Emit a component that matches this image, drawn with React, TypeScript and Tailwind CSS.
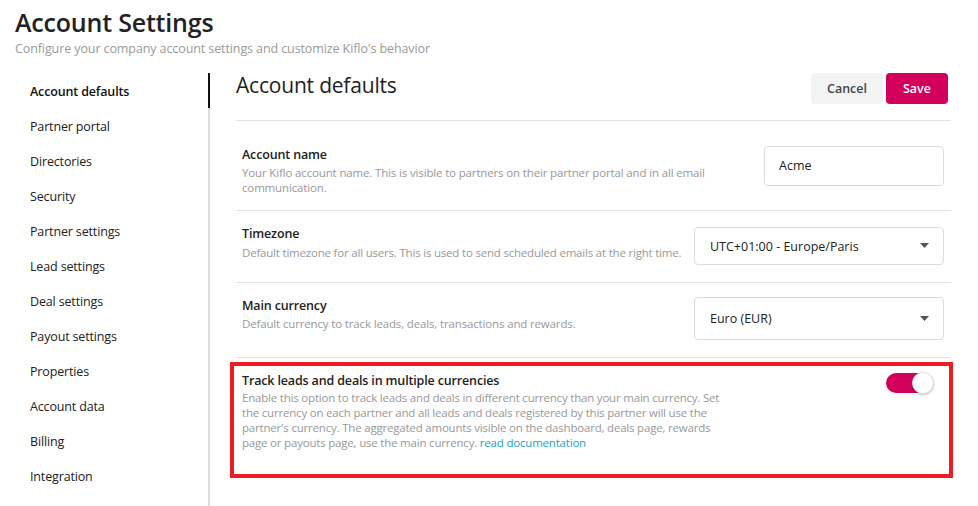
import React, { useState } from 'react';

const navItems = [
  'Account defaults',
  'Partner portal',
  'Directories',
  'Security',
  'Partner settings',
  'Lead settings',
  'Deal settings',
  'Payout settings',
  'Properties',
  'Account data',
  'Billing',
  'Integration',
];

function Caret() {
  return (
    <svg width="9" height="5" viewBox="0 0 9 5" className="shrink-0">
      <path d="M0 0h9L4.5 5z" fill="#555" />
    </svg>
  );
}

export default function App() {
  const [multiCurrency, setMultiCurrency] = useState(true);

  return (
    <div className="w-[978px] h-[506px] overflow-hidden bg-white text-[#222] font-['Open_Sans',sans-serif]">
      {/* Header */}
      <header className="pl-[15px] pt-[5px] h-[73px]">
        <h1 className="text-[25px] font-semibold leading-[34px] tracking-[-0.2px]">Account Settings</h1>
        <p className="text-[12.5px] text-[#9a9a9a] leading-[18px] mt-[1px] tracking-[-0.1px]">
          Configure your company account settings and customize Kiflo's behavior
        </p>
      </header>

      <div className="flex h-[433px]">
        {/* Sidebar */}
        <nav className="w-[210px] shrink-0 border-r-2 border-[#dcdcdc]">
          {navItems.map((item, i) => (
            <div
              key={item}
              className={`h-[35px] pl-[30px] pt-[4px] flex items-center text-[12.5px] tracking-[-0.15px] ${
                i === 0 ? 'font-semibold text-[#111] border-r-2 border-[#111] -mr-[2px]' : 'text-[#222]'
              }`}
            >
              {item}
            </div>
          ))}
        </nav>

        {/* Main */}
        <main className="flex-1 pl-[26px] pr-[27px]">
          <div className="h-[48px] flex justify-between items-start border-b border-[#e3e3e3]">
            <h2 className="text-[21px] leading-[24px] text-[#222] tracking-[-0.2px]">Account defaults</h2>
            <div className="flex gap-[3px] mr-[3px]">
              <button className="w-[72px] h-[31px] rounded-[4px] bg-[#f2f3f3] text-[12.5px] font-semibold text-[#444] pt-[2px]">
                Cancel
              </button>
              <button className="w-[62px] h-[31px] rounded-[4px] bg-[#d2005b] text-[12.5px] font-semibold text-white pt-[2px]">
                Save
              </button>
            </div>
          </div>

          {/* Account name */}
          <div className="h-[90px] flex justify-between border-b border-[#e3e3e3]">
            <div className="pt-[25px] pl-[6px] w-[480px]">
              <div className="text-[12.5px] font-semibold leading-[18px] text-[#222] tracking-[-0.15px]">Account name</div>
              <p className="text-[11.5px] leading-[15px] text-[#999] mt-[1px] tracking-[-0.15px]">
                Your Kiflo account name. This is visible to partners on their partner portal and in all email
                <br />
                communication.
              </p>
            </div>
            <div className="self-center mr-[7px] w-[180px] h-[40px] border border-[#dcdcdc] rounded-[4px] flex items-center pl-[14px] pt-[2px] text-[12.5px] text-[#222]">
              Acme
            </div>
          </div>

          {/* Timezone */}
          <div className="h-[72px] flex justify-between border-b border-[#e3e3e3]">
            <div className="pt-[14px] pl-[6px]">
              <div className="text-[12.5px] font-semibold leading-[18px] text-[#222] tracking-[-0.15px]">Timezone</div>
              <p className="text-[11.5px] leading-[15px] text-[#999] mt-[2px] tracking-[-0.2px]">
                Default timezone for all users. This is used to send scheduled emails at the right time.
              </p>
            </div>
            <div className="self-center mr-[7px] mt-[-2px] w-[250px] h-[38px] border border-[#dcdcdc] rounded-[4px] flex items-center justify-between pl-[15px] pr-[14px] text-[12.5px] text-[#222]">
              <span className="pt-[3px]">UTC+01:00 - Europe/Paris</span>
              <Caret />
            </div>
          </div>

          {/* Main currency */}
          <div className="h-[75px] flex justify-between border-b border-[#e3e3e3]">
            <div className="pt-[14px] pl-[6px]">
              <div className="text-[12.5px] font-semibold leading-[18px] text-[#222] tracking-[-0.15px]">Main currency</div>
              <p className="text-[11.5px] leading-[15px] text-[#999] mt-[1px] tracking-[-0.15px]">
                Default currency to track leads, deals, transactions and rewards.
              </p>
            </div>
            <div className="self-center mr-[7px] mt-[-4px] w-[250px] h-[43px] border border-[#dcdcdc] rounded-[4px] flex items-center justify-between pl-[15px] pr-[14px] text-[12.5px] text-[#222]">
              <span className="pt-[2px]">Euro (EUR)</span>
              <Caret />
            </div>
          </div>

          {/* Multi currency (highlighted) */}
          <div className="mt-[4px] -ml-[6px] -mr-[2px] h-[116px] border-4 border-[#ed1c24] flex justify-between">
            <div className="pt-[6px] pl-[8px] w-[490px]">
              <div className="text-[12.5px] font-semibold leading-[18px] text-[#222] tracking-[-0.15px]">
                Track leads and deals in multiple currencies
              </div>
              <p className="text-[11.5px] leading-[15px] text-[#999] tracking-[-0.2px]">
                Enable this option to track leads and deals in different currency than your main currency. Set
                <br />
                the currency on each partner and all leads and deals registered by this partner will use the
                <br />
                partner's currency. The aggregated amounts visible on the dashboard, deals page, rewards
                <br />
                page or payouts page, use the main currency.{' '}
                <a href="#" className="text-[#1ba1c6]">read documentation</a>
              </p>
            </div>
            <button
              onClick={() => setMultiCurrency(!multiCurrency)}
              className={`mt-[7px] mr-[16px] w-[47px] h-[20px] rounded-full relative ${
                multiCurrency ? 'bg-[#d2005b]' : 'bg-[#ddd]'
              }`}
            >
              <span
                className={`absolute top-[-1px] w-[22px] h-[22px] rounded-full bg-white border border-[#e2e2e2] shadow-[0_1px_2px_rgba(0,0,0,0.25)] ${
                  multiCurrency ? 'right-[-1px]' : 'left-[-1px]'
                }`}
              />
            </button>
          </div>
        </main>
      </div>
    </div>
  );
}
